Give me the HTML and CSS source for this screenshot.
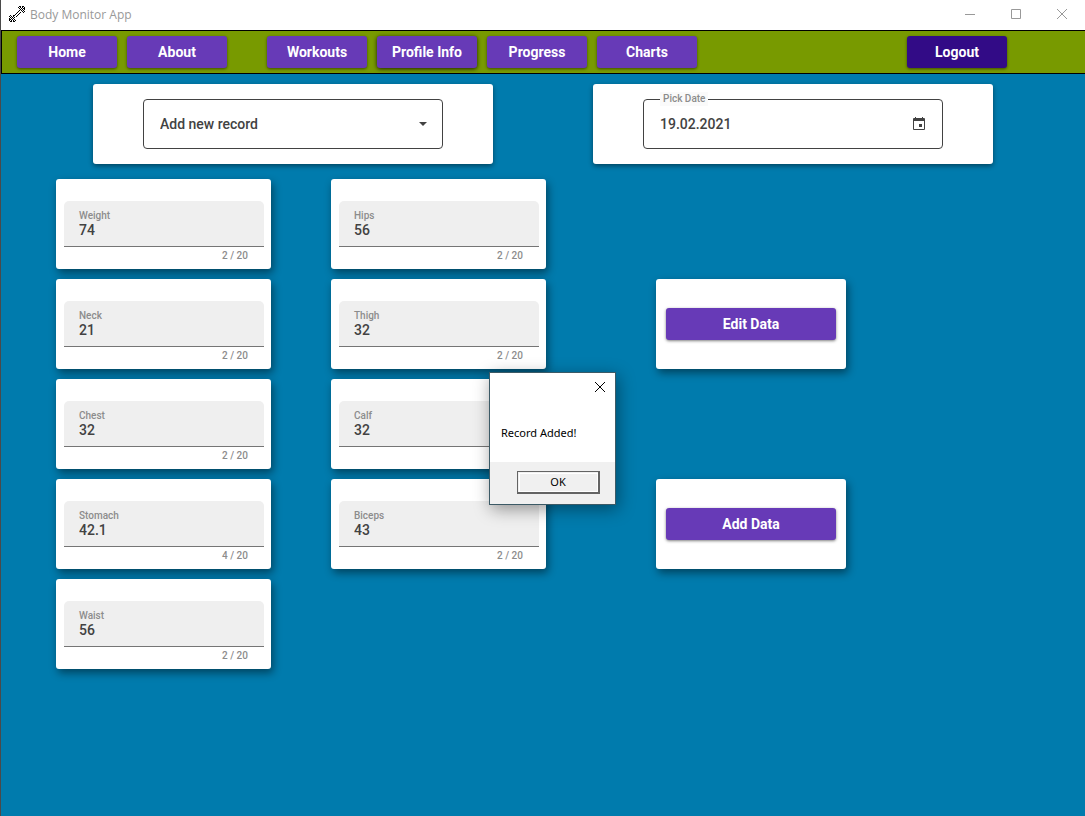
FILE: index.html
```html
<!DOCTYPE html>
<html lang="en">
<head>
<meta charset="utf-8">
<title>Body Monitor App</title>
<link rel="stylesheet" href="styles.css">
</head>
<body>
<div class="window">
  <header class="titlebar">
    <svg class="app-icon" width="16" height="16" viewBox="0 0 16 16" shape-rendering="crispEdges" aria-hidden="true">
      <path d="M10 0h2v1h-2zM13 0h2v1h-2zM9 1h1v1h-1zM11 1h1v1h-1zM13 1h1v1h-1zM15 1h1v1h-1zM10 2h1v1h-1zM12 2h1v1h-1zM14 2h2v1h-2zM11 3h1v1h-1zM13 3h1v1h-1zM15 3h1v1h-1zM10 4h1v1h-1zM12 4h1v1h-1zM14 4h1v1h-1zM9 5h1v1h-1zM13 5h1v1h-1zM15 5h1v1h-1zM8 6h1v1h-1zM11 6h1v1h-1zM14 6h1v1h-1zM7 7h1v1h-1zM10 7h1v1h-1zM6 8h1v1h-1zM9 8h1v1h-1zM1 9h1v1h-1zM4 9h2v1h-2zM8 9h1v1h-1zM0 10h1v1h-1zM2 10h1v1h-1zM4 10h1v1h-1zM7 10h1v1h-1zM1 11h1v1h-1zM3 11h1v1h-1zM5 11h1v1h-1zM0 12h1v1h-1zM2 12h1v1h-1zM4 12h1v1h-1zM0 13h2v1h-2zM3 13h1v1h-1zM5 13h1v1h-1zM0 14h1v1h-1zM2 14h1v1h-1zM4 14h1v1h-1zM6 14h1v1h-1zM1 15h2v1h-2zM4 15h2v1h-2z"/>
    </svg>
    <span class="title">Body Monitor App</span>
    <div class="window-controls">
      <button class="window-button" type="button" aria-label="Minimize"><svg width="12" height="12" viewBox="0 0 12 12"><path d="M1 6.500h10"/></svg></button>
      <button class="window-button" type="button" aria-label="Maximize"><svg width="12" height="12" viewBox="0 0 12 12"><path d="M1.500 1.500h9v9h-9z"/></svg></button>
      <button class="window-button" type="button" aria-label="Close"><svg width="12" height="12" viewBox="0 0 12 12"><path d="M1 1l10 10M11 1L1 11"/></svg></button>
    </div>
  </header>

  <nav class="navbar">
    <div class="nav-group">
      <button class="button" type="button">Home</button>
      <button class="button" type="button">About</button>
    </div>
    <div class="nav-group">
      <button class="button" type="button">Workouts</button>
      <button class="button button-raised" type="button">Profile Info</button>
      <button class="button" type="button">Progress</button>
      <button class="button" type="button">Charts</button>
    </div>
    <button class="button button-dark" type="button">Logout</button>
  </nav>

  <main class="content">
    <div class="selectors">
      <div class="card selector-card">
        <div class="outlined">
          <select class="outlined-input" aria-label="Record"><option>Add new record</option></select>
          <svg class="arrow" width="8" height="4" viewBox="0 0 8 4" aria-hidden="true"><path d="M0 0h8L4 4z"/></svg>
        </div>
      </div>
      <div class="card selector-card">
        <div class="outlined">
          <label class="outlined-label" for="date">Pick Date</label>
          <input class="outlined-input" id="date" type="text" value="19.02.2021">
          <svg class="calendar" width="14" height="14" viewBox="0 0 14 14" aria-hidden="true"><path d="M3 0h1v1h6V0h1v1h1q1 0 1 1v10q0 1-1 1H2q-1 0-1-1V2q0-1 1-1h1zM2 4v8h10V4zM7 7h3v3H7z" fill-rule="evenodd"/></svg>
        </div>
      </div>
    </div>

    <div class="columns">
      <div class="column">
        <div class="card field-card"><div class="field"><label for="weight">Weight</label><input id="weight" type="text" value="74"></div><span class="counter">2 / 20</span></div>
        <div class="card field-card"><div class="field"><label for="neck">Neck</label><input id="neck" type="text" value="21"></div><span class="counter">2 / 20</span></div>
        <div class="card field-card"><div class="field"><label for="chest">Chest</label><input id="chest" type="text" value="32"></div><span class="counter">2 / 20</span></div>
        <div class="card field-card"><div class="field"><label for="stomach">Stomach</label><input id="stomach" type="text" value="42.1"></div><span class="counter">4 / 20</span></div>
        <div class="card field-card"><div class="field"><label for="waist">Waist</label><input id="waist" type="text" value="56"></div><span class="counter">2 / 20</span></div>
      </div>
      <div class="column">
        <div class="card field-card"><div class="field"><label for="hips">Hips</label><input id="hips" type="text" value="56"></div><span class="counter">2 / 20</span></div>
        <div class="card field-card"><div class="field"><label for="thigh">Thigh</label><input id="thigh" type="text" value="32"></div><span class="counter">2 / 20</span></div>
        <div class="card field-card"><div class="field"><label for="calf">Calf</label><input id="calf" type="text" value="32"></div><span class="counter">2 / 20</span></div>
        <div class="card field-card"><div class="field"><label for="biceps">Biceps</label><input id="biceps" type="text" value="43"></div><span class="counter">2 / 20</span></div>
      </div>
      <div class="column actions">
        <div class="card action-card"><button class="button" type="button">Edit Data</button></div>
        <div class="card action-card"><button class="button" type="button">Add Data</button></div>
      </div>
    </div>
  </main>

  <div class="dialog" role="alertdialog" aria-labelledby="message">
    <button class="dialog-close" type="button" aria-label="Close"><svg width="12" height="12" viewBox="0 0 12 12"><path d="M1 1l10 10M11 1L1 11"/></svg></button>
    <p class="dialog-message" id="message">Record Added!</p>
    <div class="dialog-footer"><button class="dialog-ok" type="button">OK</button></div>
  </div>
</div>
</body>
</html>
```
FILE: styles.css
```css
* {
  box-sizing: border-box;
}

body {
  margin: 0;
  font-family: Roboto, "Liberation Sans", sans-serif;
  font-size: 14px;
  color: #424242;
}

button,
input,
select {
  margin: 0;
  padding: 0;
  border: 0;
  font: inherit;
  color: inherit;
}

.window {
  position: relative;
  display: flex;
  flex-direction: column;
  min-height: 100vh;
  border-left: 1px solid #4a4a4a;
  background: #007bad;
}

.titlebar {
  display: flex;
  align-items: center;
  height: 30px;
  padding: 0 0 2px 8px;
  background: #fff;
}

.app-icon {
  margin-right: 5px;
}

.title {
  font-family: "Open Sans", sans-serif;
  font-size: 12px;
  color: #999;
}

.window-controls {
  display: flex;
  align-self: stretch;
  margin-left: auto;
}

.window-button {
  display: flex;
  align-items: center;
  justify-content: center;
  width: 46px;
  background: none;
}

.window-button path {
  fill: none;
  stroke: #999;
}

.navbar {
  display: flex;
  align-items: center;
  gap: 40px;
  height: 44px;
  padding: 0 78px 0 15px;
  border: 1px solid #000;
  border-right: 0;
  background: #789a00;
}

.nav-group {
  display: flex;
  gap: 10px;
}

.button {
  width: 100px;
  height: 32px;
  border-radius: 3px;
  background: #673ab7;
  box-shadow: 0 1px 3px rgba(0, 0, 0, 0.5);
  color: #fff;
  font-weight: 700;
}

.button-raised {
  box-shadow: 0 1px 4px rgba(0, 0, 0, 0.8);
}

.button-dark {
  margin-left: auto;
  background: #320b86;
}

.content {
  display: flex;
  flex-direction: column;
  gap: 15px;
  padding: 10px 55px;
}

.card {
  border-radius: 3px;
  background: #fff;
  box-shadow: 2px 4px 8px rgba(0, 0, 0, 0.45);
}

.selectors {
  display: flex;
  gap: 100px;
  padding-left: 37px;
}

.selector-card {
  width: 400px;
  padding: 15px 50px;
  box-shadow: 0 2px 5px rgba(0, 0, 0, 0.45);
}

.outlined {
  position: relative;
  display: flex;
  align-items: center;
  height: 50px;
  padding: 0 15px 0 16px;
  border: 1px solid #424242;
  border-radius: 4px;
}

.outlined-input {
  flex: 1;
  min-width: 0;
  height: 32px;
  appearance: none;
  background: none;
  font-weight: 500;
}

.outlined-label {
  position: absolute;
  top: -8px;
  left: 16px;
  padding: 0 3px;
  background: #fafafa;
  color: #8c8c8c;
  font-size: 10px;
  font-weight: 500;
  line-height: 14px;
}

.arrow,
.calendar {
  fill: #424242;
}

.calendar {
  margin-right: 1px;
}

.columns {
  display: flex;
  gap: 60px;
}

.column {
  display: flex;
  flex-direction: column;
  gap: 10px;
}

.field-card {
  display: flex;
  flex-direction: column;
  width: 215px;
  height: 90px;
  padding: 22px 7px 0 8px;
}

.field {
  display: flex;
  flex-direction: column;
  height: 46px;
  padding: 8px 15px 0;
  border-bottom: 1px solid #757575;
  border-radius: 5px 5px 0 0;
  background: #efefef;
}

.field label,
.counter {
  color: #8c8c8c;
  font-size: 10px;
  font-weight: 500;
  line-height: 13px;
}

.field input {
  height: 16px;
  background: none;
  font-weight: 500;
}

.counter {
  padding: 2px 16px 0;
  text-align: right;
}

.actions {
  gap: 110px;
  padding: 100px 0 0 50px;
}

.action-card {
  display: flex;
  align-items: center;
  width: 190px;
  height: 90px;
  padding: 0 10px;
}

.action-card .button {
  flex: 1;
}

.dialog {
  position: absolute;
  top: 372px;
  left: 488px;
  display: flex;
  flex-direction: column;
  width: 127px;
  border: 1px solid #3c5a66;
  background: #fff;
  box-shadow: 2px 4px 16px rgba(0, 0, 0, 0.4);
  color: #000;
  font-family: "Noto Sans", sans-serif;
  font-size: 11px;
}

.dialog-close {
  display: flex;
  align-items: center;
  justify-content: center;
  align-self: flex-end;
  width: 30px;
  height: 28px;
  background: none;
}

.dialog-close path {
  fill: none;
  stroke: #000;
}

.dialog-message {
  margin: 0;
  padding: 24px 11px 21px;
  line-height: 16px;
  white-space: nowrap;
}

.dialog-footer {
  display: flex;
  justify-content: flex-end;
  padding: 9px 15px 10px;
  background: #f0f0f0;
}

.dialog-ok {
  width: 83px;
  height: 23px;
  padding-bottom: 1px;
  border: 1px solid #646464;
  border-right-width: 2px;
  border-bottom-width: 2px;
  outline: 1px solid #fff;
  outline-offset: -3px;
  background: #f0f0f0;
}
```
